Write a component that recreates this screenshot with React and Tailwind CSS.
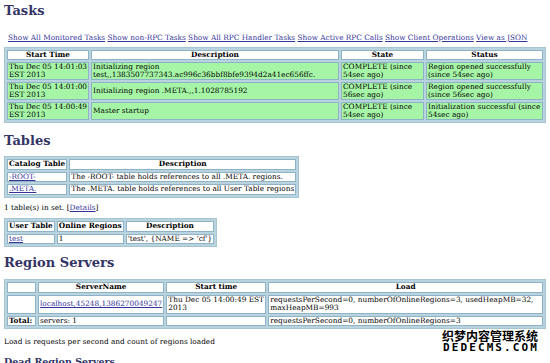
import React from "react";

const base = "border border-[#8fb3c6] px-[1px] py-0";
const cell = base + " align-top";
const mid = base + " align-middle";
const th = base + " bg-white font-bold text-center";
const tbl = "border-separate border-spacing-[2px] bg-[#b9d3df] border border-[#a7c4d2]";

function A({ children }) {
  return <a className="text-[#333399] underline">{children}</a>;
}

function N({ children }) {
  return <span className="whitespace-nowrap">{children}</span>;
}

export default function App() {
  return (
    <div className="relative w-[550px] h-[363px] overflow-hidden bg-white text-black text-[7.35px] leading-[8.5px]" style={{ fontFamily: '"DejaVu Serif", serif' }}>
      <div className="px-[4px]">
        <h1 className="text-[13px] leading-[16px] font-bold text-[#333366] pt-[3px]">Tasks</h1>
        <div className="mt-[15px] pl-[4px] whitespace-nowrap">
          <A>Show All Monitored Tasks</A> <A>Show non-RPC Tasks</A> <A>Show All RPC Handler Tasks</A> <A>Show Active RPC Calls</A> <A>Show Client Operations</A> <A>View as JSON</A>
        </div>
        <table className={tbl + " w-[542px] mt-[4px] leading-[8px]"}>
          <thead>
            <tr>
              <th className={th + " w-[80px] leading-[8.5px]"}>Start Time</th>
              <th className={th + " leading-[8.5px]"}>Description</th>
              <th className={th + " w-[83px] leading-[8.5px]"}>State</th>
              <th className={th + " w-[117px] leading-[8.5px]"}>Status</th>
            </tr>
          </thead>
          <tbody className="bg-[#a6f5a6]">
            <tr>
              <td className={cell}><N>Thu Dec 05 14:01:03</N> EST 2013</td>
              <td className={mid}>Initializing region test,,1383507737343.ac996c36bbf8bfe9394d2a41ec656ffc.</td>
              <td className={cell}>COMPLETE (since 54sec ago)</td>
              <td className={cell}>Region opened successfully (since 54sec ago)</td>
            </tr>
            <tr>
              <td className={cell}><N>Thu Dec 05 14:01:00</N> EST 2013</td>
              <td className={mid}>Initializing region .META.,,1.1028785192</td>
              <td className={cell}>COMPLETE (since 56sec ago)</td>
              <td className={cell}>Region opened successfully (since 56sec ago)</td>
            </tr>
            <tr>
              <td className={cell}><N>Thu Dec 05 14:00:49</N> EST 2013</td>
              <td className={mid}>Master startup</td>
              <td className={cell}>COMPLETE (since 54sec ago)</td>
              <td className={cell}>Initialization successful (since 54sec ago)</td>
            </tr>
          </tbody>
        </table>

        <h2 className="text-[13px] leading-[16px] font-bold text-[#333366] mt-[10px]">Tables</h2>
        <table className={tbl + " mt-[7px]"}>
          <thead>
            <tr>
              <th className={th}>Catalog Table</th>
              <th className={th}>Description</th>
            </tr>
          </thead>
          <tbody className="bg-white">
            <tr>
              <td className={cell}><A>-ROOT-</A></td>
              <td className={cell}>The -ROOT- table holds references to all .META. regions.</td>
            </tr>
            <tr>
              <td className={cell}><A>.META.</A></td>
              <td className={cell}>The .META. table holds references to all User Table regions</td>
            </tr>
          </tbody>
        </table>
        <p className="mt-[6px]">1 table(s) in set. [<A>Details</A>]</p>
        <table className={tbl + " mt-[6px]"}>
          <thead>
            <tr>
              <th className={th}>User Table</th>
              <th className={th}>Online Regions</th>
              <th className={th}>Description</th>
            </tr>
          </thead>
          <tbody className="bg-white">
            <tr>
              <td className={cell}><A>test</A></td>
              <td className={cell}>1</td>
              <td className={cell}>'test', {"{NAME => 'cf'}"}</td>
            </tr>
          </tbody>
        </table>

        <h2 className="text-[13px] leading-[16px] font-bold text-[#333366] mt-[8px]">Region Servers</h2>
        <table className={tbl + " w-[542px] mt-[8px]"}>
          <thead>
            <tr>
              <th className={th + " w-[29px]"}></th>
              <th className={th + " w-[123px]"}>ServerName</th>
              <th className={th + " w-[100px]"}>Start time</th>
              <th className={th}>Load</th>
            </tr>
          </thead>
          <tbody className="bg-white">
            <tr>
              <td className={cell}></td>
              <td className={mid}><A>localhost,45248,1386270049247</A></td>
              <td className={cell}><N>Thu Dec 05 14:00:49 EST</N> 2013</td>
              <td className={cell}>requestsPerSecond=0, numberOfOnlineRegions=3, usedHeapMB=32, maxHeapMB=993</td>
            </tr>
            <tr>
              <td className={cell + " font-bold"}>Total:</td>
              <td className={cell}>servers: 1</td>
              <td className={cell}></td>
              <td className={cell}>requestsPerSecond=0, numberOfOnlineRegions=3</td>
            </tr>
          </tbody>
        </table>
        <p className="mt-[9px]">Load is requests per second and count of regions loaded</p>
        <h3 className="text-[9.5px] leading-[12px] font-bold text-[#333366] mt-[9px]">Dead Region Servers</h3>
      </div>
      <div className="absolute left-[441px] top-[329px] w-[98px] flex flex-col items-center text-black font-bold">
        <div className="text-[12px] leading-[13px] whitespace-nowrap" style={{ fontFamily: '"Noto Sans CJK SC", sans-serif', textShadow: '0 0 2px #fff, 0 0 2px #fff' }}>织梦内容管理系统</div>
        <div className="text-[11px] leading-[11px] tracking-[2.1px] whitespace-nowrap pl-[2px]" style={{ fontFamily: '"DejaVu Sans Mono", monospace', textShadow: '0 0 2px #fff' }}>DEDECMS.COM</div>
      </div>
    </div>
  );
}
